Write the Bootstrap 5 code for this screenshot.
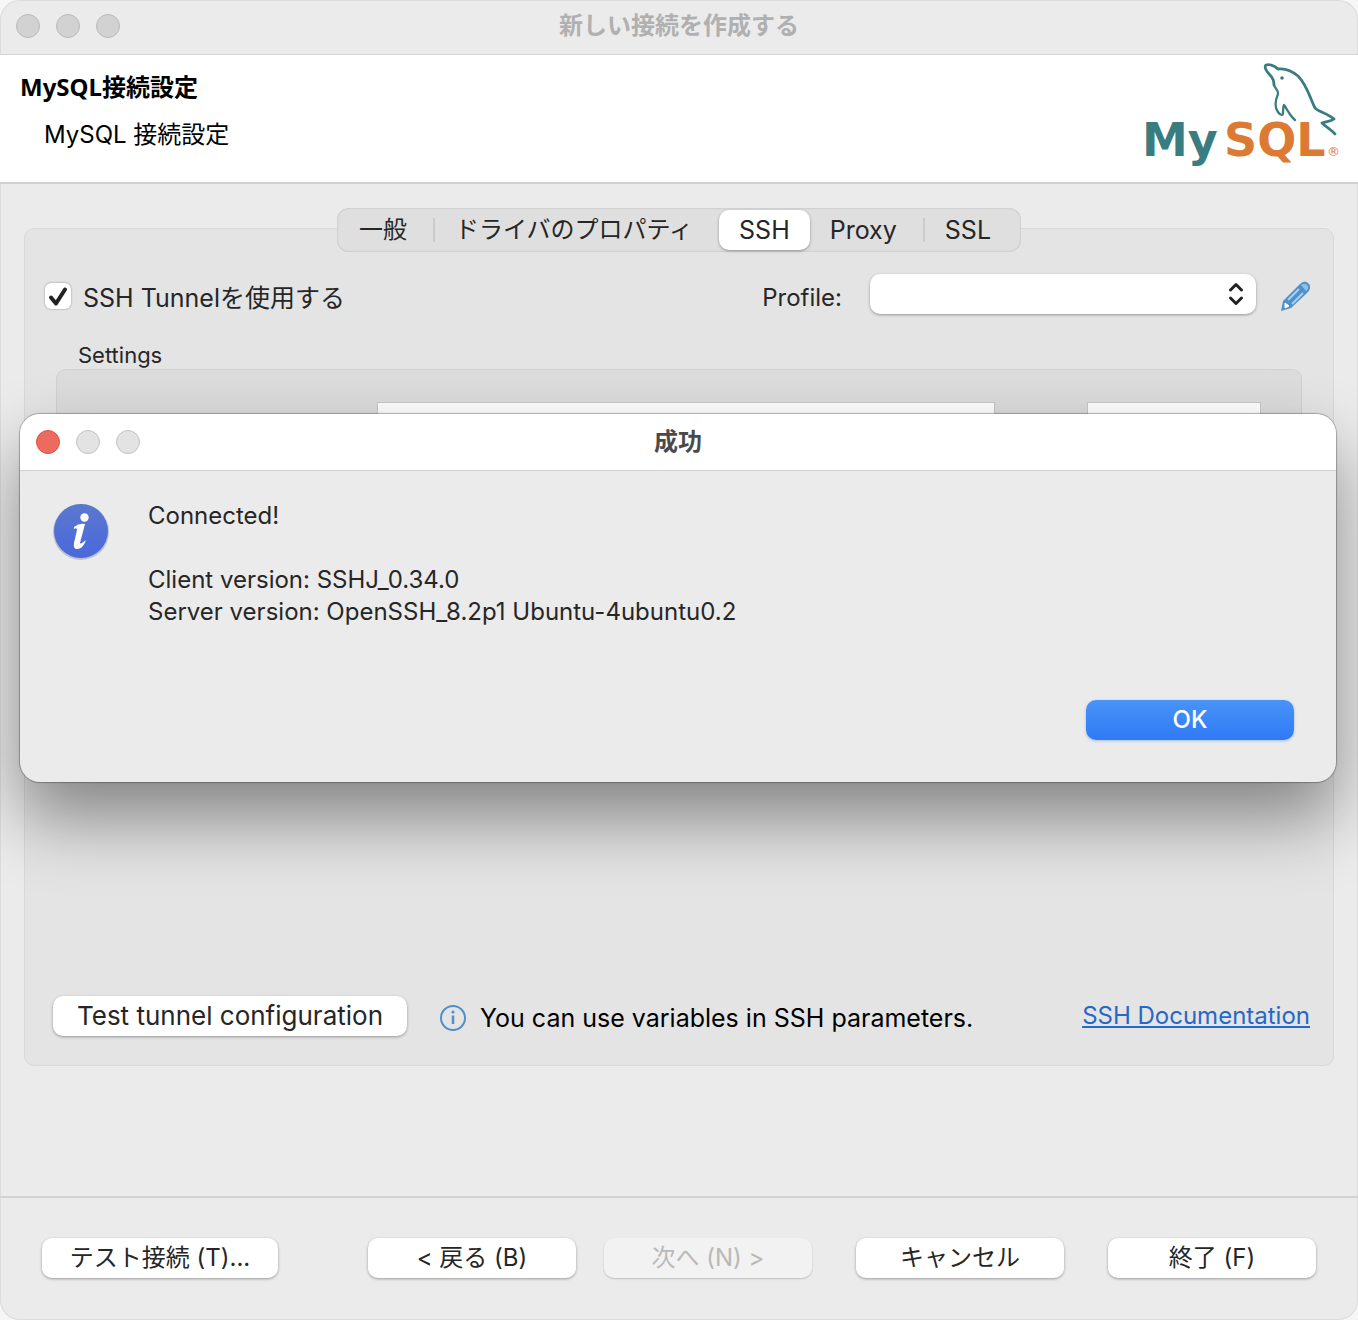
<!DOCTYPE html>
<html lang="ja">
<head>
<meta charset="utf-8">
<meta name="viewport" content="width=device-width, initial-scale=1">
<title>新しい接続を作成する</title>
<link href="https://cdn.jsdelivr.net/npm/bootstrap@5.3.0/dist/css/bootstrap.min.css" rel="stylesheet">
<style>
  body { font-family: Inter, "Noto Sans CJK JP", sans-serif; font-size: 24px; line-height: 32px; color: #262626; background: #f6f6f6; }
  .app-window { min-height: 100vh; background: #ebebeb; border-radius: 20px; box-shadow: inset 0 0 0 1px #dcdcdc; overflow: hidden; }
  .title-strip { height: 55px; padding: 0 16px 3px; border-bottom: 1px solid #d4d4d4; font-weight: 700; color: #b0b0b0; }
  .lights { gap: 16px; }
  .light { width: 24px; height: 24px; padding: 0; border: 1px solid #b9b9b9; border-radius: 50%; background: #d2d2d2; }
  .title-text { margin-left: -104px; pointer-events: none; }
  .banner { height: 129px; padding: 8px 18px 0 20px; background: #fff; border-bottom: 2px solid #d0d0d0; color: #000; }
  .banner h1 { font-family: "Noto Sans", "Noto Sans CJK JP", sans-serif; font-size: 24px; line-height: 32px; font-weight: 700; margin: 8px 0 16px; }
  .banner p { margin: 0 0 0 24px; }
  .stage { padding: 24px 24px 0; }
  .seg { height: 44px; padding: 2px 10px 2px 2px; border-radius: 12px; background: #dfdfdf; box-shadow: inset 0 0 2px rgba(0,0,0,.22); margin-bottom: -24px; position: relative; }
  .seg .nav-link { height: 40px; padding: 0 20px; line-height: 40px; border-radius: 10px; color: #262626; }
  .seg .nav-link.active { margin-left: 6px; background: #fff; color: #262626; box-shadow: 0 1px 3px rgba(0,0,0,.35); }
  .seg-line { width: 2px; height: 24px; margin-left: 6px; background: #cbcbcb; }
  .text-25 { font-size: 25px; }
  .panel { height: 838px; border: 1px solid #d8d8d8; border-radius: 10px; background: #e4e4e4; padding: 45px 23px 29px 20px; }
  .check-box { appearance: none; width: 26px; height: 26px; margin: 0; border-radius: 6px; background: #fff; box-shadow: 0 0 2px rgba(0,0,0,.45); }
  .check-box:checked { background: #fff url("data:image/svg+xml,%3Csvg xmlns='http://www.w3.org/2000/svg' viewBox='0 0 26 26'%3E%3Cpath d='M6 14.5l5 6 9-14' fill='none' stroke='%23222' stroke-width='4' stroke-linecap='round' stroke-linejoin='round'/%3E%3C/svg%3E") center/26px; }
  .row-label { padding-top: 7px; }
  .profile-select { width: 386px; height: 40px; margin-left: 28px; border: 0; border-radius: 10px; box-shadow: 0 1px 3px rgba(0,0,0,.35); background: #fff url("data:image/svg+xml,%3Csvg xmlns='http://www.w3.org/2000/svg' viewBox='0 0 16 24'%3E%3Cpath d='M2.500 8L8 2.500l5.500 5.500M2.500 16L8 21.500l5.500-5.500' fill='none' stroke='%23222' stroke-width='3' stroke-linecap='round' stroke-linejoin='round'/%3E%3C/svg%3E") no-repeat right 12px center/16px 24px; }
  .icon-btn { padding: 4px 0 0; border: 0; background: none; line-height: 0; }
  .settings-label { font-size: 22px; line-height: 28px; margin: 27px 0 0 33px; }
  .settings-box { height: 360px; margin: 0 8px 0 11px; padding: 32px 40px 0 320px; border: 1px solid #d0d0d0; border-radius: 10px; background: #dcdcdc; }
  .plain-field { height: 44px; border: 1px solid #c8c8c8; border-radius: 0; background: #fff; }
  .port-field { width: 174px; margin-left: 92px; }
  .push { height: 40px; padding: 0 8px; border: 0; border-radius: 10px; background: #fff; color: #262626; font-size: 24px; line-height: 38px; box-shadow: 0 1px 3px rgba(0,0,0,.35); }
  .push:disabled { background: #f2f2f2; color: #b9b9b9; opacity: 1; box-shadow: 0 1px 2px rgba(0,0,0,.2); }
  .push.w-test { width: 354px; font-size: 26px; }
  .w-wide { width: 236px; }
  .w-std { width: 208px; }
  .hint { color: #000; margin-left: 32px; gap: 13px; }
  .doc-link { color: #2468c8; }
  .footer-strip { height: 124px; border-top: 2px solid #d2d2d2; padding: 0 42px 2px; }
  .footer-group { gap: 44px; }
  .footer-pair { gap: 28px; }
  .alert-window { position: absolute; top: 414px; left: 20px; right: 22px; height: 368px; border-radius: 20px; background: #ebebeb; overflow: hidden; }
  .alert-shadow { box-shadow: 0 0 1px 1px rgba(0,0,0,.28), 0 36px 70px rgba(0,0,0,.42); }
  .alert-title { height: 57px; padding: 0 16px; background: #fff; border-bottom: 1px solid #cfcfcf; font-weight: 700; color: #4a4a4a; }
  .alert-title .light { background: #e3e3e3; border-color: #c3c3c3; }
  .alert-title .light.close-light { background: #ec6a5e; border-color: #d6574c; }
  .alert-main { padding: 29px 42px 42px 31px; gap: 37px; }
  .push.ok-btn { color: #fff; font-weight: 500; background: linear-gradient(#4894f8, #2f7af5); box-shadow: 0 1px 3px rgba(47,122,245,.4); }
</style>
<script src="https://cdn.jsdelivr.net/npm/bootstrap@5.3.0/dist/js/bootstrap.bundle.min.js"></script>
</head>
<body>
<div class="app-window d-flex flex-column position-relative">
  <header class="title-strip d-flex align-items-center">
    <div class="lights d-flex">
      <button class="light" type="button" aria-label="閉じる"></button>
      <button class="light" type="button" aria-label="しまう"></button>
      <button class="light" type="button" aria-label="拡大"></button>
    </div>
    <div class="title-text flex-grow-1 text-center">新しい接続を作成する</div>
  </header>

  <section class="banner d-flex justify-content-between">
    <div>
      <h1>MySQL接続設定</h1>
      <p>MySQL 接続設定</p>
    </div>
    <svg width="198" height="108" viewBox="0 0 198 108" role="img" aria-label="MySQL">
      <g fill="none" stroke="#3a7d80" stroke-width="2.800" stroke-linejoin="round" stroke-linecap="round">
        <path d="M132 22C132 18 131 15 128 12C124 8 122 4 124 2C128 1 133 3 136 6C144 5 150 8 156 13C165 22 168 35 173 45C177 49 185 50 192 56C188 59 184 58 180 60C184 64 190 67 193 71"/>
        <path d="M132 22C133 26 137 27 136 31C133 38 133 45 136 49C138 52 141 53 141 50C141 46 141 44 142 42C145 46 148 53 153 57" stroke-width="2.300"/>
      </g>
      <circle cx="140" cy="15" r="1.800" fill="#3a7d80"/>
      <text x="0" y="93" font-family="DejaVu Sans" font-weight="700" font-size="46" fill="#3a7d80">My</text>
      <text x="82" y="93" font-family="DejaVu Sans" font-weight="700" font-size="46" fill="#dc7a34">SQL</text>
      <text x="185" y="93" font-family="DejaVu Sans" font-size="13" fill="#dc7a34">®</text>
    </svg>
  </section>

  <main class="stage flex-grow-1 d-flex flex-column align-items-center">
    <nav class="seg nav flex-nowrap align-items-center" aria-label="設定">
      <a class="nav-link" href="#">一般</a><span class="seg-line"></span>
      <a class="nav-link" href="#">ドライバのプロパティ</a>
      <a class="nav-link active text-25" href="#" aria-current="page">SSH</a>
      <a class="nav-link text-25" href="#">Proxy</a><span class="seg-line"></span>
      <a class="nav-link text-25" href="#">SSL</a>
    </nav>
    <div class="panel w-100 d-flex flex-column">
      <div class="d-flex align-items-center">
        <input class="check-box mt-1" type="checkbox" id="useTunnel" checked>
        <label for="useTunnel" class="row-label text-25 ms-2 ps-1">SSH Tunnelを使用する</label>
        <label for="profile" class="row-label ms-auto">Profile:</label>
        <select id="profile" class="form-select profile-select"><option></option></select>
        <button class="icon-btn ms-4" type="button" aria-label="編集">
          <svg width="30" height="32" viewBox="0 0 30 32">
            <path d="M1 31L3 21L20 4Q25-1 29 4Q32 8 27 13L11 28Z" fill="#4f90c8"/>
            <path d="M8 20L19 9M12 24L23 13" stroke="#a5d0f0" stroke-width="2"/>
            <path d="M21 5Q25 2 28 6Q29 9 26 11Z" fill="#90bfe6"/>
            <path d="M5 23L9 26L5 28Z" fill="#fff" stroke="#fff" stroke-linejoin="round"/>
          </svg>
        </button>
      </div>
      <div class="settings-label" id="settingsLabel">Settings</div>
      <div class="settings-box d-flex" role="group" aria-labelledby="settingsLabel">
        <input class="plain-field flex-grow-1" type="text" aria-label="Host">
        <input class="plain-field port-field" type="text" aria-label="Port">
      </div>
      <div class="d-flex align-items-center mt-auto ps-2">
        <button class="push w-test" type="button">Test tunnel configuration</button>
        <div class="hint text-25 d-flex align-items-center pt-1">
          <svg width="28" height="28" viewBox="0 0 28 28" aria-hidden="true"><circle cx="14" cy="14" r="12" fill="none" stroke="#4f90c8" stroke-width="2"/><path d="M14 11.500V20" stroke="#4f90c8" stroke-width="2.500"/><circle cx="14" cy="8" r="1.600" fill="#4f90c8"/></svg>
          <span>You can use variables in SSH parameters.</span>
        </div>
        <a class="doc-link ms-auto" href="#">SSH Documentation</a>
      </div>
    </div>
  </main>

  <footer class="footer-strip d-flex align-items-center">
    <button class="push w-wide" type="button">テスト接続 (T)...</button>
    <div class="footer-group d-flex ms-auto">
      <div class="footer-pair d-flex">
        <button class="push w-std" type="button">&lt; 戻る (B)</button>
        <button class="push w-std" type="button" disabled>次へ (N) &gt;</button>
      </div>
      <button class="push w-std" type="button">キャンセル</button>
      <button class="push w-std" type="button">終了 (F)</button>
    </div>
  </footer>

  <div class="alert-window alert-shadow d-flex flex-column" role="dialog" aria-labelledby="alertTitle">
    <div class="alert-title d-flex align-items-center">
      <div class="lights d-flex">
        <button class="light close-light" type="button" aria-label="閉じる"></button>
        <button class="light" type="button" disabled aria-label="しまう"></button>
        <button class="light" type="button" disabled aria-label="拡大"></button>
      </div>
      <div class="title-text flex-grow-1 text-center" id="alertTitle">成功</div>
    </div>
    <div class="alert-main flex-grow-1 d-flex">
      <svg class="flex-shrink-0" width="60" height="62" viewBox="0 0 60 62" aria-hidden="true">
        <defs><linearGradient id="infoFill" x2="0" y2="1"><stop stop-color="#5b78cf"/><stop offset="1" stop-color="#4a68dc"/></linearGradient></defs>
        <circle cx="30" cy="32" r="28" fill="#9aa3bd" opacity=".6"/>
        <circle cx="30" cy="31" r="27" fill="url(#infoFill)"/>
        <circle cx="33.500" cy="17.500" r="4.200" fill="#fff"/>
        <path d="M23 27Q28 23 34 24L29 43Q29 45 35 40Q32 49 26 49Q22 49 23 43L26 30Q26 27 23 29Z" fill="#fff"/>
      </svg>
      <div class="flex-grow-1 d-flex flex-column">
        <div>Connected!<br><br>Client version: SSHJ_0.34.0<br>Server version: OpenSSH_8.2p1 Ubuntu-4ubuntu0.2</div>
        <button class="push ok-btn w-std mt-auto ms-auto" type="button">OK</button>
      </div>
    </div>
  </div>
</div>
</body>
</html>
